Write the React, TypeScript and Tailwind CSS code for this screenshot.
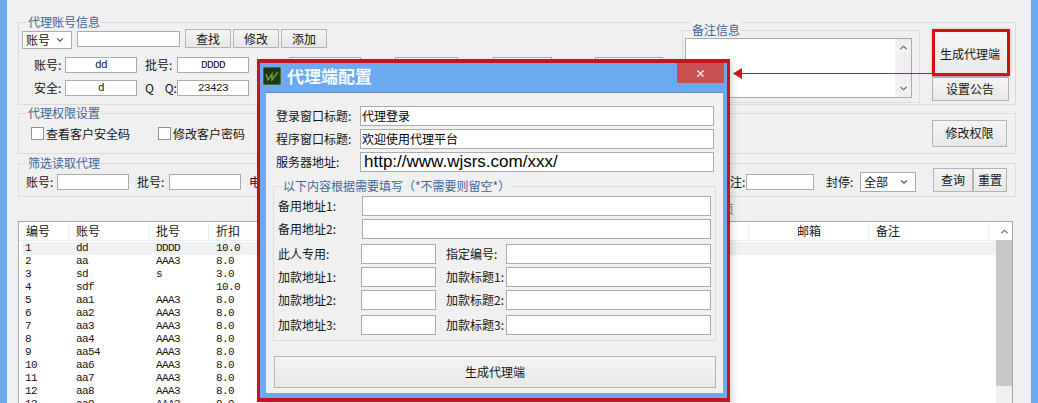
import { ReactNode } from "react";
import { ChevronDown, ChevronUp, X } from "lucide-react";

const ROWS = [
  ["1", "dd", "DDDD", "10.0"],
  ["2", "aa", "AAA3", "8.0"],
  ["3", "sd", "s", "3.0"],
  ["4", "sdf", "", "10.0"],
  ["5", "aa1", "AAA3", "8.0"],
  ["6", "aa2", "AAA3", "8.0"],
  ["7", "aa3", "AAA3", "8.0"],
  ["8", "aa4", "AAA3", "8.0"],
  ["9", "aa54", "AAA3", "8.0"],
  ["10", "aa6", "AAA3", "8.0"],
  ["11", "aa7", "AAA3", "8.0"],
  ["12", "aa8", "AAA3", "8.0"],
  ["13", "aa9", "AAA3", "8.0"],
];

function Group({ title, className, children }: { title: string; className: string; children: ReactNode }) {
  return (
    <div className={`border border-[#dcdcdc] ${className}`}>
      <div className="-mt-[9px] -mb-[7px] ml-[8px] h-4 w-fit bg-[#f0f0f0] px-px text-[12px] leading-4 text-[#3f6699]">{title}</div>
      {children}
    </div>
  );
}

function Btn({ className, children }: { className: string; children: ReactNode }) {
  return (
    <div className={`flex shrink-0 items-center justify-center border border-[#b4b4b4] bg-gradient-to-b from-[#f4f4f4] to-[#e8e8e8] text-[12px] ${className}`}>
      {children}
    </div>
  );
}

function Box({ className, children }: { className: string; children?: ReactNode }) {
  return <div className={`flex shrink-0 items-center border border-[#ababab] bg-white ${className}`}>{children}</div>;
}

function Field({ label, labelW, inputW, value }: { label: string; labelW: string; inputW: string; value?: string }) {
  return (
    <div className="flex shrink-0 items-center">
      <span className={`whitespace-pre text-[12px] leading-4 ${labelW}`}>{label}</span>
      <Box className={`h-4 justify-center font-['Liberation_Mono',monospace] text-[11px] tracking-[-0.6px] ${inputW}`}>{value}</Box>
    </div>
  );
}

function Dropdown({ text, className }: { text: string; className: string }) {
  return (
    <div className={`flex shrink-0 items-center justify-between border border-[#ababab] bg-white pl-[3px] pr-[6px] text-[12px] ${className}`}>
      {text}
      <ChevronDown size={10} strokeWidth={3} className="text-[#666]" />
    </div>
  );
}

function Check({ label, className }: { label: string; className: string }) {
  return (
    <div className={`flex items-center gap-[2px] text-[12px] ${className}`}>
      <div className="h-[13px] w-[13px] border border-[#8f8f8f] bg-white" />
      {label}
    </div>
  );
}

function ScrollArrow({ up }: { up?: boolean }) {
  return up ? (
    <ChevronUp size={11} strokeWidth={3} className="text-[#707070]" />
  ) : (
    <ChevronDown size={11} strokeWidth={3} className="text-[#707070]" />
  );
}

function AccountGroup() {
  return (
    <Group title="代理账号信息" className="h-[83px] w-[998px]">
      <div className="flex">
        <div className="w-[663px] shrink-0">
          <div className="mt-[6px] flex items-start pl-[3px]">
            <Dropdown text="账号" className="mt-[2px] h-[18px] w-[50px]" />
            <Box className="mt-[2px] ml-[5px] h-4 w-[103px]" />
            <Btn className="ml-[5px] h-[19px] w-[46px]">查找</Btn>
            <Btn className="ml-[2px] h-[19px] w-[46px]">修改</Btn>
            <Btn className="ml-[2px] h-[19px] w-[46px]">添加</Btn>
          </div>
          <div className="mt-[8px] flex gap-[8px] pl-[15px]">
            <Field label="账号:" labelW="w-[31px]" inputW="w-[72px]" value="dd" />
            <Field label="批号:" labelW="w-[32px]" inputW="w-[72px]" value="DDDD" />
            <Field label="密码:" labelW="w-[32px]" inputW="w-[72px]" />
            <Field label="电话:" labelW="w-[26px]" inputW="w-[63px]" />
            <Field label="邮箱:" labelW="w-[27px]" inputW="w-[59px]" />
            <Field label="到期:" labelW="w-[35px]" inputW="w-[68px]" />
          </div>
          <div className="mt-[7px] flex gap-[8px] pl-[15px]">
            <Field label="安全:" labelW="w-[31px]" inputW="w-[72px]" value="d" />
            <Field label="Q    Q:" labelW="w-[32px]" inputW="w-[72px]" value="23423" />
          </div>
        </div>
        <Group title="备注信息" className="mt-[7px] h-[73px] w-[238px] shrink-0">
          <div className="mt-[7px] ml-[2px] flex h-[60px] w-[227px] border border-[#ababab] bg-white">
            <div className="flex-1" />
            <div className="flex w-[16px] flex-col items-center justify-between bg-[#f0f0f0] py-[3px]">
              <ScrollArrow up />
              <ScrollArrow />
            </div>
          </div>
        </Group>
        <div className="mt-[8px] ml-[11px] flex w-[78px] flex-col items-center">
          <Btn className="h-[46px] w-[76px]">生成代理端</Btn>
          <Btn className="h-[24px] w-[77px]">设置公告</Btn>
        </div>
      </div>
    </Group>
  );
}

function PermissionGroup() {
  return (
    <Group title="代理权限设置" className="mt-[8px] h-[41px] w-[998px]">
      <div className="flex h-[39px] items-center justify-between pr-[8px] pl-[12px]">
        <div className="flex">
          <Check label="查看客户安全码" className="w-[127px]" />
          <Check label="修改客户密码" className="w-[100px]" />
        </div>
        <Btn className="mb-[1px] h-[27px] w-[75px]">修改权限</Btn>
      </div>
    </Group>
  );
}

function FilterGroup() {
  return (
    <Group title="筛选读取代理" className="mt-[9px] h-[34px] w-[998px]">
      <div className="flex items-start pt-[4px] pr-[8px] pl-[7px]">
        <div className="mt-[6px] flex gap-[8px]">
          <Field label="账号:" labelW="w-[31px]" inputW="w-[72px]" />
          <Field label="批号:" labelW="w-[32px]" inputW="w-[72px]" />
          <Field label="电话:" labelW="w-[32px]" inputW="w-[72px]" />
        </div>
        <div className="flex-1" />
        <div className="mt-[6px]">
          <Field label="备注:" labelW="w-[28px]" inputW="w-[68px]" />
        </div>
        <span className="mt-[6px] ml-[12px] w-[34px] text-[12px] leading-4">封停:</span>
        <Dropdown text="全部" className="mt-[4px] h-[20px] w-[56px]" />
        <Btn className="ml-[17px] h-[24px] w-[40px]">查询</Btn>
        <Btn className="h-[24px] w-[34px]">重置</Btn>
      </div>
    </Group>
  );
}

function AgentList() {
  return (
    <div className="flex h-[190px] w-[995px] border border-b-0 border-[#a8a8a8] bg-white">
      <div className="w-[977px] overflow-hidden">
        <div className="grid h-[19px] grid-cols-[50px_80px_60px_540px_120px_120px_7px] border-b border-[#e3edf7] text-[12px] leading-[18px]">
          <div className="border-r border-[#eeeeee] pl-[7px]">编号</div>
          <div className="border-r border-[#eeeeee] pl-[7px]">账号</div>
          <div className="border-r border-[#eeeeee] pl-[7px]">批号</div>
          <div className="border-r border-[#eeeeee] pl-[7px]">折扣</div>
          <div className="border-r border-[#eeeeee] pl-[48px]">邮箱</div>
          <div className="border-r border-[#eeeeee] pl-[7px]">备注</div>
        </div>
        <div className="ml-[3px] pt-[1px] font-['Liberation_Mono',monospace] text-[11px] tracking-[-0.6px]">
          {ROWS.map((row, i) => (
            <div key={row[0]} className={`grid h-[13px] grid-cols-[47px_80px_60px_60px] leading-[13px] ${i === 0 ? "bg-[#f0f0f0]" : ""}`}>
              <div className="pl-[3px]">{row[0]}</div>
              <div className="pl-[7px]">{row[1]}</div>
              <div className="pl-[7px]">{row[2]}</div>
              <div className="pl-[7px]">{row[3]}</div>
            </div>
          ))}
        </div>
      </div>
      <div className="flex w-[16px] flex-col bg-[#f0f0f0]">
        <div className="flex h-[18px] items-center justify-center bg-white">
          <ScrollArrow up />
        </div>
        <div className="h-[146px] bg-[#c8c8c8]" />
      </div>
    </div>
  );
}

function DialogRow({ label, className, children }: { label: string; className: string; children?: ReactNode }) {
  return (
    <div className="flex h-[20px] items-center">
      <span className="w-[84px] shrink-0 text-[12px]">{label}</span>
      <Box className={`h-[20px] ${className}`}>{children}</Box>
    </div>
  );
}

function PairRow({ left, right, className }: { left: string; right: string; className: string }) {
  return (
    <div className={`flex h-[20px] items-center ${className}`}>
      <span className="w-[83px] shrink-0 text-[12px]">{left}</span>
      <Box className="h-[20px] w-[75px]" />
      <span className="ml-[10px] w-[60px] shrink-0 text-[12px]">{right}</span>
      <Box className="h-[20px] w-[205px]" />
    </div>
  );
}

function Dialog() {
  return (
    <div className="absolute top-[59px] left-[257px] flex h-[343px] w-[473px] flex-col border-x-[3px] border-y-4 border-[#c4141f] bg-[#6ba9f0] shadow-[3px_3px_6px_rgba(0,0,0,0.15)]">
      <div className="flex h-[29px] shrink-0 items-start justify-between pr-[3px]">
        <div className="flex items-center pt-[4px] pl-[3px]">
          <svg width="18" height="18" viewBox="0 0 18 18">
            <rect width="18" height="18" rx="2" fill="#1f3518" />
            <rect x="0.5" y="0.5" width="17" height="17" rx="2" fill="none" stroke="#4b6f3a" />
            <path d="M3 7 L5 13 L9 7 L9 13 L15 5" fill="none" stroke="#6fa52e" strokeWidth="1.4" />
          </svg>
          <span className="ml-[6px] text-[17px] leading-[18px] font-bold text-[#f4f9ff]">代理端配置</span>
        </div>
        <div className="flex h-[20px] w-[47px] items-center justify-center bg-[#c75050] text-white">
          <X size={11} strokeWidth={2.5} />
        </div>
      </div>
      <div className="mr-[4px] mb-[5px] ml-[6px] flex-1 border-t border-[#5b8fc9] bg-[#f0f0f0] pt-[13px]">
        <div className="flex flex-col gap-[3px] pl-[10px]">
          <DialogRow label="登录窗口标题:" className="w-[354px] pl-[1px] text-[12px] text-black">代理登录</DialogRow>
          <DialogRow label="程序窗口标题:" className="w-[354px] pl-[1px] text-[12px] text-black">欢迎使用代理平台</DialogRow>
          <DialogRow label="服务器地址:" className="w-[354px] pl-[3px] font-['Liberation_Sans',sans-serif] text-[17px] text-black">http://www.wjsrs.com/xxx/</DialogRow>
        </div>
        <Group title="以下内容根据需要填写（*不需要则留空*）" className="mt-[14px] ml-[7px] h-[155px] w-[443px]">
          <div className="pt-[9px] pl-[4px]">
            <DialogRow label="备用地址1:" className="w-[349px]" />
            <div className="mt-[3px]">
              <DialogRow label="备用地址2:" className="w-[349px]" />
            </div>
            <PairRow left="此人专用:" right="指定编号:" className="mt-[5px]" />
            <PairRow left="加款地址1:" right="加款标题1:" className="mt-[3px]" />
            <PairRow left="加款地址2:" right="加款标题2:" className="mt-[3px]" />
            <PairRow left="加款地址3:" right="加款标题3:" className="mt-[5px]" />
          </div>
        </Group>
        <Btn className="mt-[15px] ml-[8px] h-[32px] w-[442px]">生成代理端</Btn>
      </div>
    </div>
  );
}

export default function App() {
  return (
    <div className="relative flex h-[403px] w-[1038px] overflow-hidden bg-[#f0f0f0] font-['Noto_Sans_CJK_SC',sans-serif] text-[#141414]">
      <div className="w-[7px] shrink-0 bg-[#6ba9f0]" />
      <div className="flex-1 pt-[22px] pl-[11px]">
        <AccountGroup />
        <PermissionGroup />
        <FilterGroup />
        <div className="h-[24px] w-[716px] pt-[4px] text-right text-[12px] leading-4 text-[#808080]">第1页</div>
        <AgentList />
      </div>
      <div className="w-[7px] shrink-0 bg-[#6ba9f0]" />

      <Dialog />

      {/* red callout over the screenshot */}
      <div className="absolute top-[29px] left-[932px] h-[47px] w-[78px] border-[3px] border-[#cc1418] shadow-[0_0_3px_rgba(204,20,24,0.25)]" />
      <div className="absolute top-[73px] left-[740px] h-px w-[192px] bg-[#d01818]" />
      <svg className="absolute top-[68px] left-[733px]" width="9" height="11" viewBox="0 0 9 11">
        <path d="M0 5.5 L9 0 L9 11 Z" fill="#d81010" />
      </svg>
    </div>
  );
}
